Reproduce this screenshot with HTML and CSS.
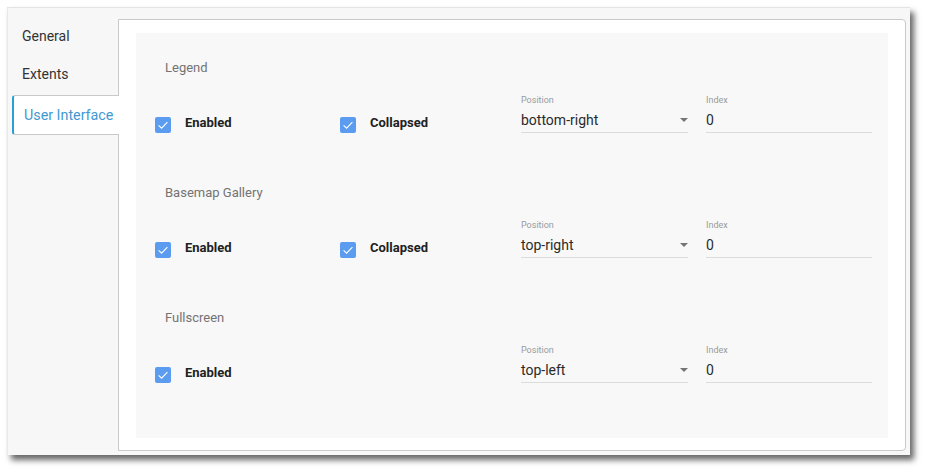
FILE: index.html
```html
<!DOCTYPE html>
<html>
<head>
<meta charset="utf-8">
<link rel="stylesheet" href="styles.css">
</head>
<body>
<div class="window">
  <nav class="tabs">
    <div class="tab">General</div>
    <div class="tab">Extents</div>
    <div class="tab active">User Interface</div>
  </nav>
  <main class="content">
    <div class="card">
      <section class="section">
        <div class="section-title">Legend</div>
        <div class="row">
          <label class="check-item"><span class="checkbox"><svg viewBox="0 0 16 16"><path d="M3.6 8.4 L6.6 11.2 L12.4 5.2" /></svg></span><span class="check-label">Enabled</span></label>
          <label class="check-item"><span class="checkbox"><svg viewBox="0 0 16 16"><path d="M3.6 8.4 L6.6 11.2 L12.4 5.2" /></svg></span><span class="check-label">Collapsed</span></label>
          <div class="field select">
            <div class="field-label">Position</div>
            <div class="field-value"><span>bottom-right</span><span class="caret"></span></div>
          </div>
          <div class="field index">
            <div class="field-label">Index</div>
            <div class="field-value"><span>0</span></div>
          </div>
        </div>
      </section>
      <section class="section">
        <div class="section-title">Basemap Gallery</div>
        <div class="row">
          <label class="check-item"><span class="checkbox"><svg viewBox="0 0 16 16"><path d="M3.6 8.4 L6.6 11.2 L12.4 5.2" /></svg></span><span class="check-label">Enabled</span></label>
          <label class="check-item"><span class="checkbox"><svg viewBox="0 0 16 16"><path d="M3.6 8.4 L6.6 11.2 L12.4 5.2" /></svg></span><span class="check-label">Collapsed</span></label>
          <div class="field select">
            <div class="field-label">Position</div>
            <div class="field-value"><span>top-right</span><span class="caret"></span></div>
          </div>
          <div class="field index">
            <div class="field-label">Index</div>
            <div class="field-value"><span>0</span></div>
          </div>
        </div>
      </section>
      <section class="section">
        <div class="section-title">Fullscreen</div>
        <div class="row">
          <label class="check-item"><span class="checkbox"><svg viewBox="0 0 16 16"><path d="M3.6 8.4 L6.6 11.2 L12.4 5.2" /></svg></span><span class="check-label">Enabled</span></label>
          <div class="check-item empty"></div>
          <div class="field select">
            <div class="field-label">Position</div>
            <div class="field-value"><span>top-left</span><span class="caret"></span></div>
          </div>
          <div class="field index">
            <div class="field-label">Index</div>
            <div class="field-value"><span>0</span></div>
          </div>
        </div>
      </section>
    </div>
  </main>
</div>
</body>
</html>
```
FILE: styles.css
```css
html, body {
  margin: 0;
  padding: 0;
  background: #ffffff;
}
body {
  font-family: Roboto, "Liberation Sans", Arial, sans-serif;
  color: #212121;
  min-height: 472px;
  padding-top: 7px;
  box-sizing: border-box;
}
.window {
  box-sizing: border-box;
  margin: 0 0 0 7px;
  width: 903px;
  height: 448px;
  background: #f7f7f7;
  border-top: 1px solid #e4e4e4;
  border-left: 1px solid #e8e8e8;
  box-shadow: 4px 5px 6px rgba(0, 0, 0, 0.6);
  display: flex;
}
.tabs {
  width: 110px;
  flex: none;
  padding-top: 9px;
  padding-left: 4px;
  box-sizing: border-box;
  display: flex;
  flex-direction: column;
}
.tab {
  height: 38px;
  line-height: 38px;
  padding-left: 10px;
  font-size: 14px;
  color: #333333;
  white-space: nowrap;
}
.tab.active {
  position: relative;
  z-index: 1;
  margin-top: 2px;
  margin-right: -1px;
  height: 38px;
  line-height: 38px;
  background: #ffffff;
  border: 1px solid #c9c9c9;
  border-left: 2px solid #2a9fd6;
  border-right: none;
  border-radius: 3px 0 0 3px;
  color: #3f98d2;
  font-size: 14.3px;
}
.content {
  box-sizing: border-box;
  flex: 1;
  margin: 11px 4px 4px 0;
  background: #ffffff;
  border: 1px solid #c9c9c9;
  border-radius: 0 4px 4px 0;
  padding: 13px 17px 12px 17px;
  display: flex;
}
.card {
  flex: 1;
  background: #f8f8f8;
  padding: 27px 0 0 19px;
  box-sizing: border-box;
}
.section {
  margin-bottom: 51px;
}
.section-title {
  padding-left: 10px;
  font-size: 13px;
  line-height: 16px;
  height: 16px;
  color: #737373;
  margin-bottom: 19px;
}
.row {
  display: flex;
  align-items: flex-start;
  height: 39px;
}
.check-item {
  display: flex;
  align-items: flex-start;
  flex: none;
}
.check-item:first-child {
  width: 185px;
}
.check-item:nth-child(2) {
  width: 181px;
}
.checkbox {
  margin-top: 22px;
  width: 16px;
  height: 16px;
  border-radius: 2px;
  background: #5b9cf0;
  display: block;
}
.checkbox svg {
  display: block;
  width: 16px;
  height: 16px;
}
.checkbox path {
  fill: none;
  stroke: #ffffff;
  stroke-width: 1.1;
}
.check-label {
  margin-top: 20px;
  margin-left: 14px;
  font-size: 13px;
  line-height: 16px;
  font-weight: bold;
  color: #212121;
}
.field {
  flex: none;
  box-sizing: border-box;
  border-bottom: 1px solid #dcdcdc;
  padding-bottom: 2px;
}
.field.select {
  width: 167px;
  margin-right: 18px;
}
.field.index {
  width: 166px;
}
.field-label {
  font-size: 9px;
  line-height: 11px;
  height: 11px;
  color: #9a9a9a;
}
.field-value {
  margin-top: 4px;
  font-size: 14px;
  line-height: 20px;
  height: 20px;
  color: #2a2a2a;
  display: flex;
  justify-content: space-between;
  align-items: center;
}
.caret {
  width: 0;
  height: 0;
  border-left: 4px solid transparent;
  border-right: 4px solid transparent;
  border-top: 4px solid #757575;
}
```
